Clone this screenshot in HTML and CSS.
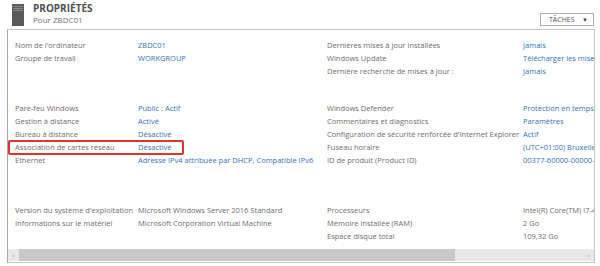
FILE: index.html
```html
<!DOCTYPE html>
<html lang="fr">
  <head>
    <meta charset="utf-8">
    <title>Propriétés</title>
    <link rel="stylesheet" href="styles.css">
  </head>
  <body>
    <header class="tile-header">
      <svg class="server-icon" width="12" height="22" viewBox="0 0 12 22">
        <rect x="0" y="0" width="12" height="22" fill="#5a5a5a" />
        <rect x="1" y="2" width="10" height="1" fill="#8a8a8a" />
        <rect x="1" y="4" width="10" height="1" fill="#8a8a8a" />
        <rect x="1" y="6" width="10" height="1" fill="#8a8a8a" />
      </svg>
      <div class="titles">
        <h1>PROPRIÉTÉS</h1>
        <p>Pour ZBDC01</p>
      </div>
      <button class="tasks" type="button">TÂCHES <span class="caret">▼</span></button>
    </header>

    <section class="panel">
      <div class="viewport">
        <div class="group">
          <span class="label">Nom de l'ordinateur</span>
          <span class="value">ZBDC01</span>
          <span class="label">Dernières mises à jour installées</span>
          <span class="value">Jamais</span>

          <span class="label">Groupe de travail</span>
          <span class="value">WORKGROUP</span>
          <span class="label">Windows Update</span>
          <span class="value">Télécharger les mises à jour uniquement</span>

          <span></span>
          <span></span>
          <span class="label">Dernière recherche de mises à jour :</span>
          <span class="value">Jamais</span>
        </div>

        <div class="group">
          <span class="label">Pare-feu Windows</span>
          <span class="value">Public : Actif</span>
          <span class="label">Windows Defender</span>
          <span class="value">Protection en temps réel : Activé</span>

          <span class="label">Gestion à distance</span>
          <span class="value">Activé</span>
          <span class="label">Commentaires et diagnostics</span>
          <span class="value">Paramètres</span>

          <span class="label">Bureau à distance</span>
          <span class="value">Désactivé</span>
          <span class="label">Configuration de sécurité renforcée d'Internet Explorer</span>
          <span class="value">Actif</span>

          <span class="label flagged">Association de cartes réseau</span>
          <span class="value">Désactivé</span>
          <span class="label">Fuseau horaire</span>
          <span class="value">(UTC+01:00) Bruxelles, Copenhague</span>

          <span class="label">Ethernet</span>
          <span class="value">Adresse IPv4 attribuée par DHCP, Compatible IPv6</span>
          <span class="label">ID de produit (Product ID)</span>
          <span class="value">00377-60000-00000-AA000</span>
        </div>

        <div class="group last">
          <span class="label">Version du système d'exploitation</span>
          <span class="label">Microsoft Windows Server 2016 Standard</span>
          <span class="label">Processeurs</span>
          <span class="label">Intel(R) Core(TM) i7-4770 CPU</span>

          <span class="label">Informations sur le matériel</span>
          <span class="label">Microsoft Corporation Virtual Machine</span>
          <span class="label">Mémoire installée (RAM)</span>
          <span class="label">2 Go</span>

          <span></span>
          <span></span>
          <span class="label">Espace disque total</span>
          <span class="label">109,32 Go</span>
        </div>
      </div>

      <div class="hscroll">
        <span class="arrow">&lsaquo;</span>
        <div class="track">
          <div class="thumb"></div>
        </div>
        <span class="arrow">&rsaquo;</span>
      </div>
    </section>
  </body>
</html>
```

FILE: styles.css
```css
body {
  margin: 0;
  width: 600px;
  height: 266px;
  overflow: hidden;
  background-color: #fff;
  font-family: "Open Sans", "Noto Sans", sans-serif;
  font-size: 7.5px;
  color: #6e6e6e;
}

.tile-header {
  display: flex;
  align-items: flex-start;
  height: 29px;
  padding-left: 12px;
  padding-right: 6px;
  box-sizing: border-box;
}

.server-icon {
  margin-top: 4px;
}

.titles {
  margin-left: 9px;
  margin-top: 2px;
}

.titles h1 {
  margin: 0;
  font-size: 10px;
  line-height: 13px;
  font-weight: 700;
  color: #505050;
}

.titles p {
  margin: 0;
  font-size: 8px;
  line-height: 10px;
  color: #707070;
}

.tasks {
  margin-left: auto;
  margin-top: 13px;
  height: 13px;
  width: 54px;
  padding: 0 5px 0 8px;
  display: flex;
  align-items: center;
  justify-content: space-between;
  border: 1px solid #adadad;
  background-color: #fff;
  font-family: inherit;
  font-size: 7px;
  color: #555;
}

.tasks .caret {
  font-size: 6px;
  color: #444;
}

.panel {
  margin-left: 7px;
  width: 588px;
  height: 234px;
  box-sizing: border-box;
  border: 1px solid #c6c6c6;
  border-left-color: #a8a8a8;
  display: flex;
  flex-direction: column;
}

.viewport {
  flex: 1;
  overflow: hidden;
  padding: 9px 0 0 7px;
}

.group {
  display: grid;
  grid-template-columns: 123px 189px 196px 200px;
  grid-auto-rows: 13px;
  line-height: 13px;
  white-space: nowrap;
  margin-bottom: 24px;
}

.group:nth-child(2) {
  margin-bottom: 37px;
}

.value {
  color: #2f73bf;
}

.flagged {
  position: relative;
}

.flagged::after {
  content: "";
  position: absolute;
  left: -7px;
  top: -1px;
  width: 172px;
  height: 11px;
  border: 2px solid #d9372f;
  border-radius: 2px;
}

.hscroll {
  display: flex;
  height: 12px;
  margin-bottom: 1px;
  background-color: #e8e8e8;
}

.hscroll .arrow {
  width: 11px;
  text-align: center;
  font-size: 8px;
  line-height: 12px;
  color: #9a9a9a;
}

.track {
  flex: 1;
}

.thumb {
  width: 436px;
  height: 100%;
  background-color: #c8c8c8;
}
```
